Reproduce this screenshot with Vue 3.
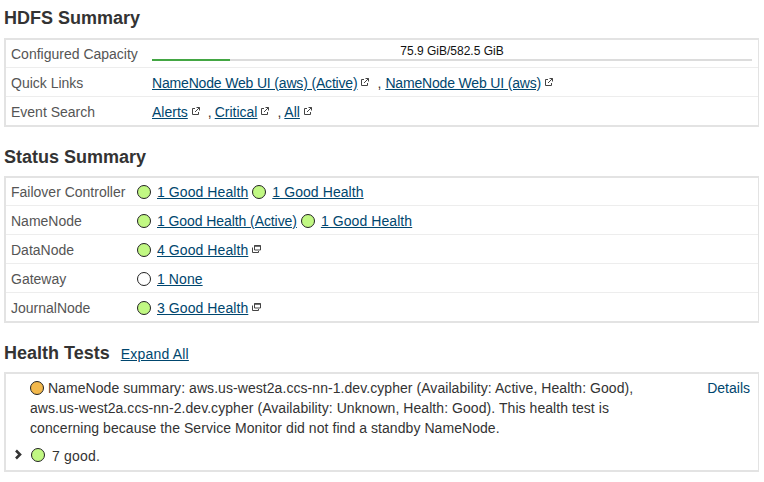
<template>
  <div class="page">
    <h2 class="title first">HDFS Summary</h2>
    <div class="box">
      <div class="row">
        <div class="label wide">Configured Capacity</div>
        <div class="capacity">
          <div class="capText">75.9 GiB/582.5 GiB</div>
          <div class="track"><div class="used" :style="{width: usedPct + '%'}"></div></div>
        </div>
      </div>
      <div class="row" v-for="row in linkRows" :key="row.label">
        <div class="label wide">{{row.label}}</div>
        <div class="links" :class="row.type">
          <span v-for="(link,i) in row.links" :key="link" class="linkItem">
            <span v-if="i>0" class="comma">,</span>
            <a href="#">{{link}}</a>
            <svg class="ext" width="8" height="8" viewBox="0 0 8 8">
              <path d="M3 1.500H.5v6h6V5" fill="none" stroke="#444" stroke-width="1"/>
              <path d="M3 5 7.500 .5M4.500 .5h3V3.500" fill="none" stroke="#444" stroke-width="1"/>
            </svg>
          </span>
        </div>
      </div>
    </div>

    <h2 class="title second">Status Summary</h2>
    <div class="box">
      <div class="row" v-for="row in statusRows" :key="row.label">
        <div class="label narrow">{{row.label}}</div>
        <div class="status">
          <span v-for="item in row.items" :key="item.text" class="statusItem">
            <span class="dot" :class="item.color"></span>
            <a href="#" :class="{tight: item.tight}">{{item.text}}</a>
            <svg v-if="row.popup" class="popup" width="9" height="8" viewBox="0 0 9 8">
              <path d="M2.500 .5h6v4.500h-6z" fill="none" stroke="#444"/>
              <path d="M2.500 1h6" stroke="#444" stroke-width="1.500"/>
              <path d="M.5 2.500v5h6V6" fill="none" stroke="#444"/>
            </svg>
          </span>
        </div>
      </div>
    </div>

    <div class="healthHead">
      <h2 class="title inline">Health Tests</h2>
      <a href="#" class="expand">Expand All</a>
    </div>
    <div class="box health">
      <div class="test">
        <div class="msg">
          <span class="dot orange"></span> NameNode summary: aws.us-west2a.ccs-nn-1.dev.cypher (Availability: Active, Health: Good), aws.us-west2a.ccs-nn-2.dev.cypher (Availability: Unknown, Health: Good). This health test is concerning because the Service Monitor did not find a standby NameNode.
        </div>
        <a href="#" class="details">Details</a>
      </div>
      <div class="goodRow">
        <svg class="chev" width="9" height="11" viewBox="0 0 9 11">
          <path d="M2 1.500 6 5.500 2 9.500" fill="none" stroke="#333" stroke-width="2.600"/>
        </svg>
        <span class="dot green"></span>
        <span class="goodText">7 good.</span>
      </div>
    </div>
  </div>
</template>

<script setup>
const usedPct = 13

const linkRows = [
  {label:"Quick Links",type:"quick",links:["NameNode Web UI (aws) (Active)","NameNode Web UI (aws)"]},
  {label:"Event Search",type:"event",links:["Alerts","Critical","All"]}
]

const statusRows = [
  {label:"Failover Controller",items:[{text:"1 Good Health",color:"green"},{text:"1 Good Health ",color:"green"}]},
  {label:"NameNode",items:[{text:"1 Good Health (Active)",color:"green",tight:true},{text:"1 Good Health",color:"green"}]},
  {label:"DataNode",popup:true,items:[{text:"4 Good Health",color:"green"}]},
  {label:"Gateway",items:[{text:"1 None",color:"white"}]},
  {label:"JournalNode",popup:true,items:[{text:"3 Good Health",color:"green"}]}
]
</script>

<style>
html, body {
  background: #fff;
}
</style>

<style scoped>
  .page{
    width: 764px;
    height: 482px;
    box-sizing: border-box;
    padding: 0 5px 0 4px;
    overflow: hidden;
    font-family: "Liberation Sans", Arial, sans-serif;
    font-size: 14px;
    color: #333;
  }
  .title{
    margin: 20px 0 9px;
    font-size: 18px;
    line-height: 21px;
    font-weight: bold;
    color: #333;
  }
  .title.first{
    margin-top: 8px;
  }
  .title.second{
    margin-bottom: 8px;
  }
  .title.inline{
    margin: 0;
  }
  a{
    color: #00466e;
    text-decoration: underline;
  }
  .box{
    border: 2px solid #e3e3e3;
    border-right-width: 1px;
    box-sizing: border-box;
  }
  .row{
    display: flex;
    align-items: center;
    height: 29px;
    box-sizing: border-box;
    padding-top: 2px;
    border-top: 1px solid #ededed;
  }
  .row:first-child{
    border-top: none;
    height: 27px;
    padding-top: 0;
  }
  .label{
    flex: none;
    padding-left: 5px;
    color: #555;
  }
  .wide{
    width: 141px;
  }
  .narrow{
    width: 126px;
  }
  .capacity{
    width: 600px;
    height: 100%;
    display: flex;
    flex-direction: column;
    justify-content: flex-end;
  }
  .capText{
    font-size: 12px;
    line-height: 14px;
    color: #111;
    text-align: center;
  }
  .track{
    height: 2px;
    margin: 1px 0 6px;
    background: #dcdcdc;
  }
  .used{
    height: 100%;
    background: #43a643;
  }
  .links{
    display: flex;
  }
  .linkItem{
    display: flex;
    align-items: center;
  }
  .quick a{
    letter-spacing: -0.17px;
  }
  .comma{
    margin: 0 4px 0 8px;
  }
  .event .comma{
    margin-right: 3px;
  }
  .ext{
    margin: -2px 0 0 4px;
  }
  .status{
    display: flex;
    gap: 4px;
  }
  .statusItem{
    display: flex;
    align-items: center;
  }
  .statusItem a{
    letter-spacing: 0.08px;
  }
  .statusItem a.tight{
    letter-spacing: -0.08px;
  }
  .statusItem .dot{
    margin-right: 6px;
  }
  .popup{
    margin: -2px 0 0 4px;
  }
  .dot{
    display: inline-block;
    width: 14px;
    height: 14px;
    box-sizing: border-box;
    border: 1px solid #222;
    border-radius: 50%;
    vertical-align: -2px;
  }
  .green{
    background: #c1f883;
  }
  .white{
    background: #fff;
  }
  .orange{
    background: #f2b84b;
  }
  .healthHead{
    display: flex;
    align-items: center;
    gap: 11px;
    margin: 20px 0 8px;
  }
  .expand{
    letter-spacing: 0.2px;
  }
  .health{
    height: 100px;
    padding: 4px 8px 0 24px;
  }
  .test{
    display: flex;
    justify-content: space-between;
  }
  .msg{
    width: 630px;
    line-height: 20px;
    letter-spacing: 0.06px;
  }
  .details{
    color: #00466e;
    text-decoration: none;
    line-height: 20px;
  }
  .goodRow{
    display: flex;
    align-items: center;
    margin: 10px 0 0 -16px;
  }
  .chev{
    margin: 0 8px 4px 0;
  }
  .goodRow .dot{
    margin-bottom: 2px;
  }
  .goodText{
    margin-left: 7px;
    letter-spacing: 0.2px;
  }
</style>
